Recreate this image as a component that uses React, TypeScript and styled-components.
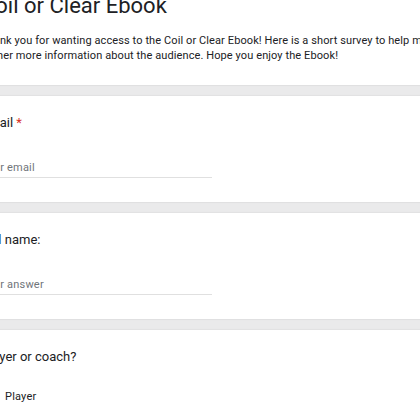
import React from "react";
import styled, { createGlobalStyle } from "styled-components";

const GlobalStyle = createGlobalStyle`
  html, body {
    margin: 0;
    padding: 0;
    background: #eaeaeb;
    overflow: hidden;
  }
  body {
    font-family: Roboto, "Liberation Sans", Arial, sans-serif;
    color: #202124;
  }
`;

const Page = styled.main`
  display: flex;
  flex-direction: column;
  gap: 11px;
  width: 480px;
  margin: -6px 0 0 -19px;
`;

const Card = styled.section`
  background: #ffffff;
  display: flex;
  flex-direction: column;
  box-shadow: 0 1px 1px rgba(0, 0, 0, 0.04), 0 -1px 1px rgba(0, 0, 0, 0.03);
`;

const HeaderCard = styled(Card)`
  padding: 0 0 22px;
`;

const QuestionCard = styled(Card)`
  padding: 18px 0 24px;
  min-height: 64px;
`;

const Title = styled.h1`
  margin: 0;
  font-family: Roboto, "Open Sans", sans-serif;
  font-size: 22px;
  line-height: 24px;
  font-weight: 400;
  color: #202124;
`;

const Description = styled.p`
  margin: 15px 0 0;
  font-size: 11px;
  line-height: 15px;
  letter-spacing: 0.1px;
  color: #202124;
  width: 466px;
`;

const QuestionTitle = styled.div`
  font-size: 13px;
  line-height: 18px;
  color: #202124;
`;

const Required = styled.span`
  color: #d93025;
  margin-left: 3px;
`;

const TextInput = styled.div`
  margin-top: 28px;
  width: 231px;
  font-size: 11px;
  line-height: 15px;
  letter-spacing: 0.2px;
  color: #70757a;
  padding-bottom: 2px;
  border-bottom: 1px solid #e0e0e0;
`;

const Options = styled.div`
  margin-top: 23px;
  display: flex;
  flex-direction: column;
  gap: 14px;
`;

const Option = styled.label`
  display: flex;
  align-items: center;
  gap: 8px;
  font-size: 11px;
  line-height: 16px;
  letter-spacing: 0.2px;
  color: #202124;
`;

const Radio = styled.span`
  width: 12px;
  height: 12px;
  flex: 0 0 auto;
  border: 2px solid #5f6368;
  border-radius: 50%;
`;

export default function App() {
  return (
    <>
      <GlobalStyle />
      <Page>
        <HeaderCard>
          <Title>Coil or Clear Ebook</Title>
          <Description>
            Thank you for wanting access to the Coil or Clear Ebook! Here is a
            short survey to help me gather more information about the audience.
            Hope you enjoy the Ebook!
          </Description>
        </HeaderCard>
        <QuestionCard>
          <QuestionTitle>
            Email<Required>*</Required>
          </QuestionTitle>
          <TextInput>Your email</TextInput>
        </QuestionCard>
        <QuestionCard>
          <QuestionTitle>Full name:</QuestionTitle>
          <TextInput>Your answer</TextInput>
        </QuestionCard>
        <QuestionCard>
          <QuestionTitle>Player or coach?</QuestionTitle>
          <Options>
            <Option>
              <Radio />
              Player
            </Option>
            <Option>
              <Radio />
              Coach
            </Option>
          </Options>
        </QuestionCard>
      </Page>
    </>
  );
}
